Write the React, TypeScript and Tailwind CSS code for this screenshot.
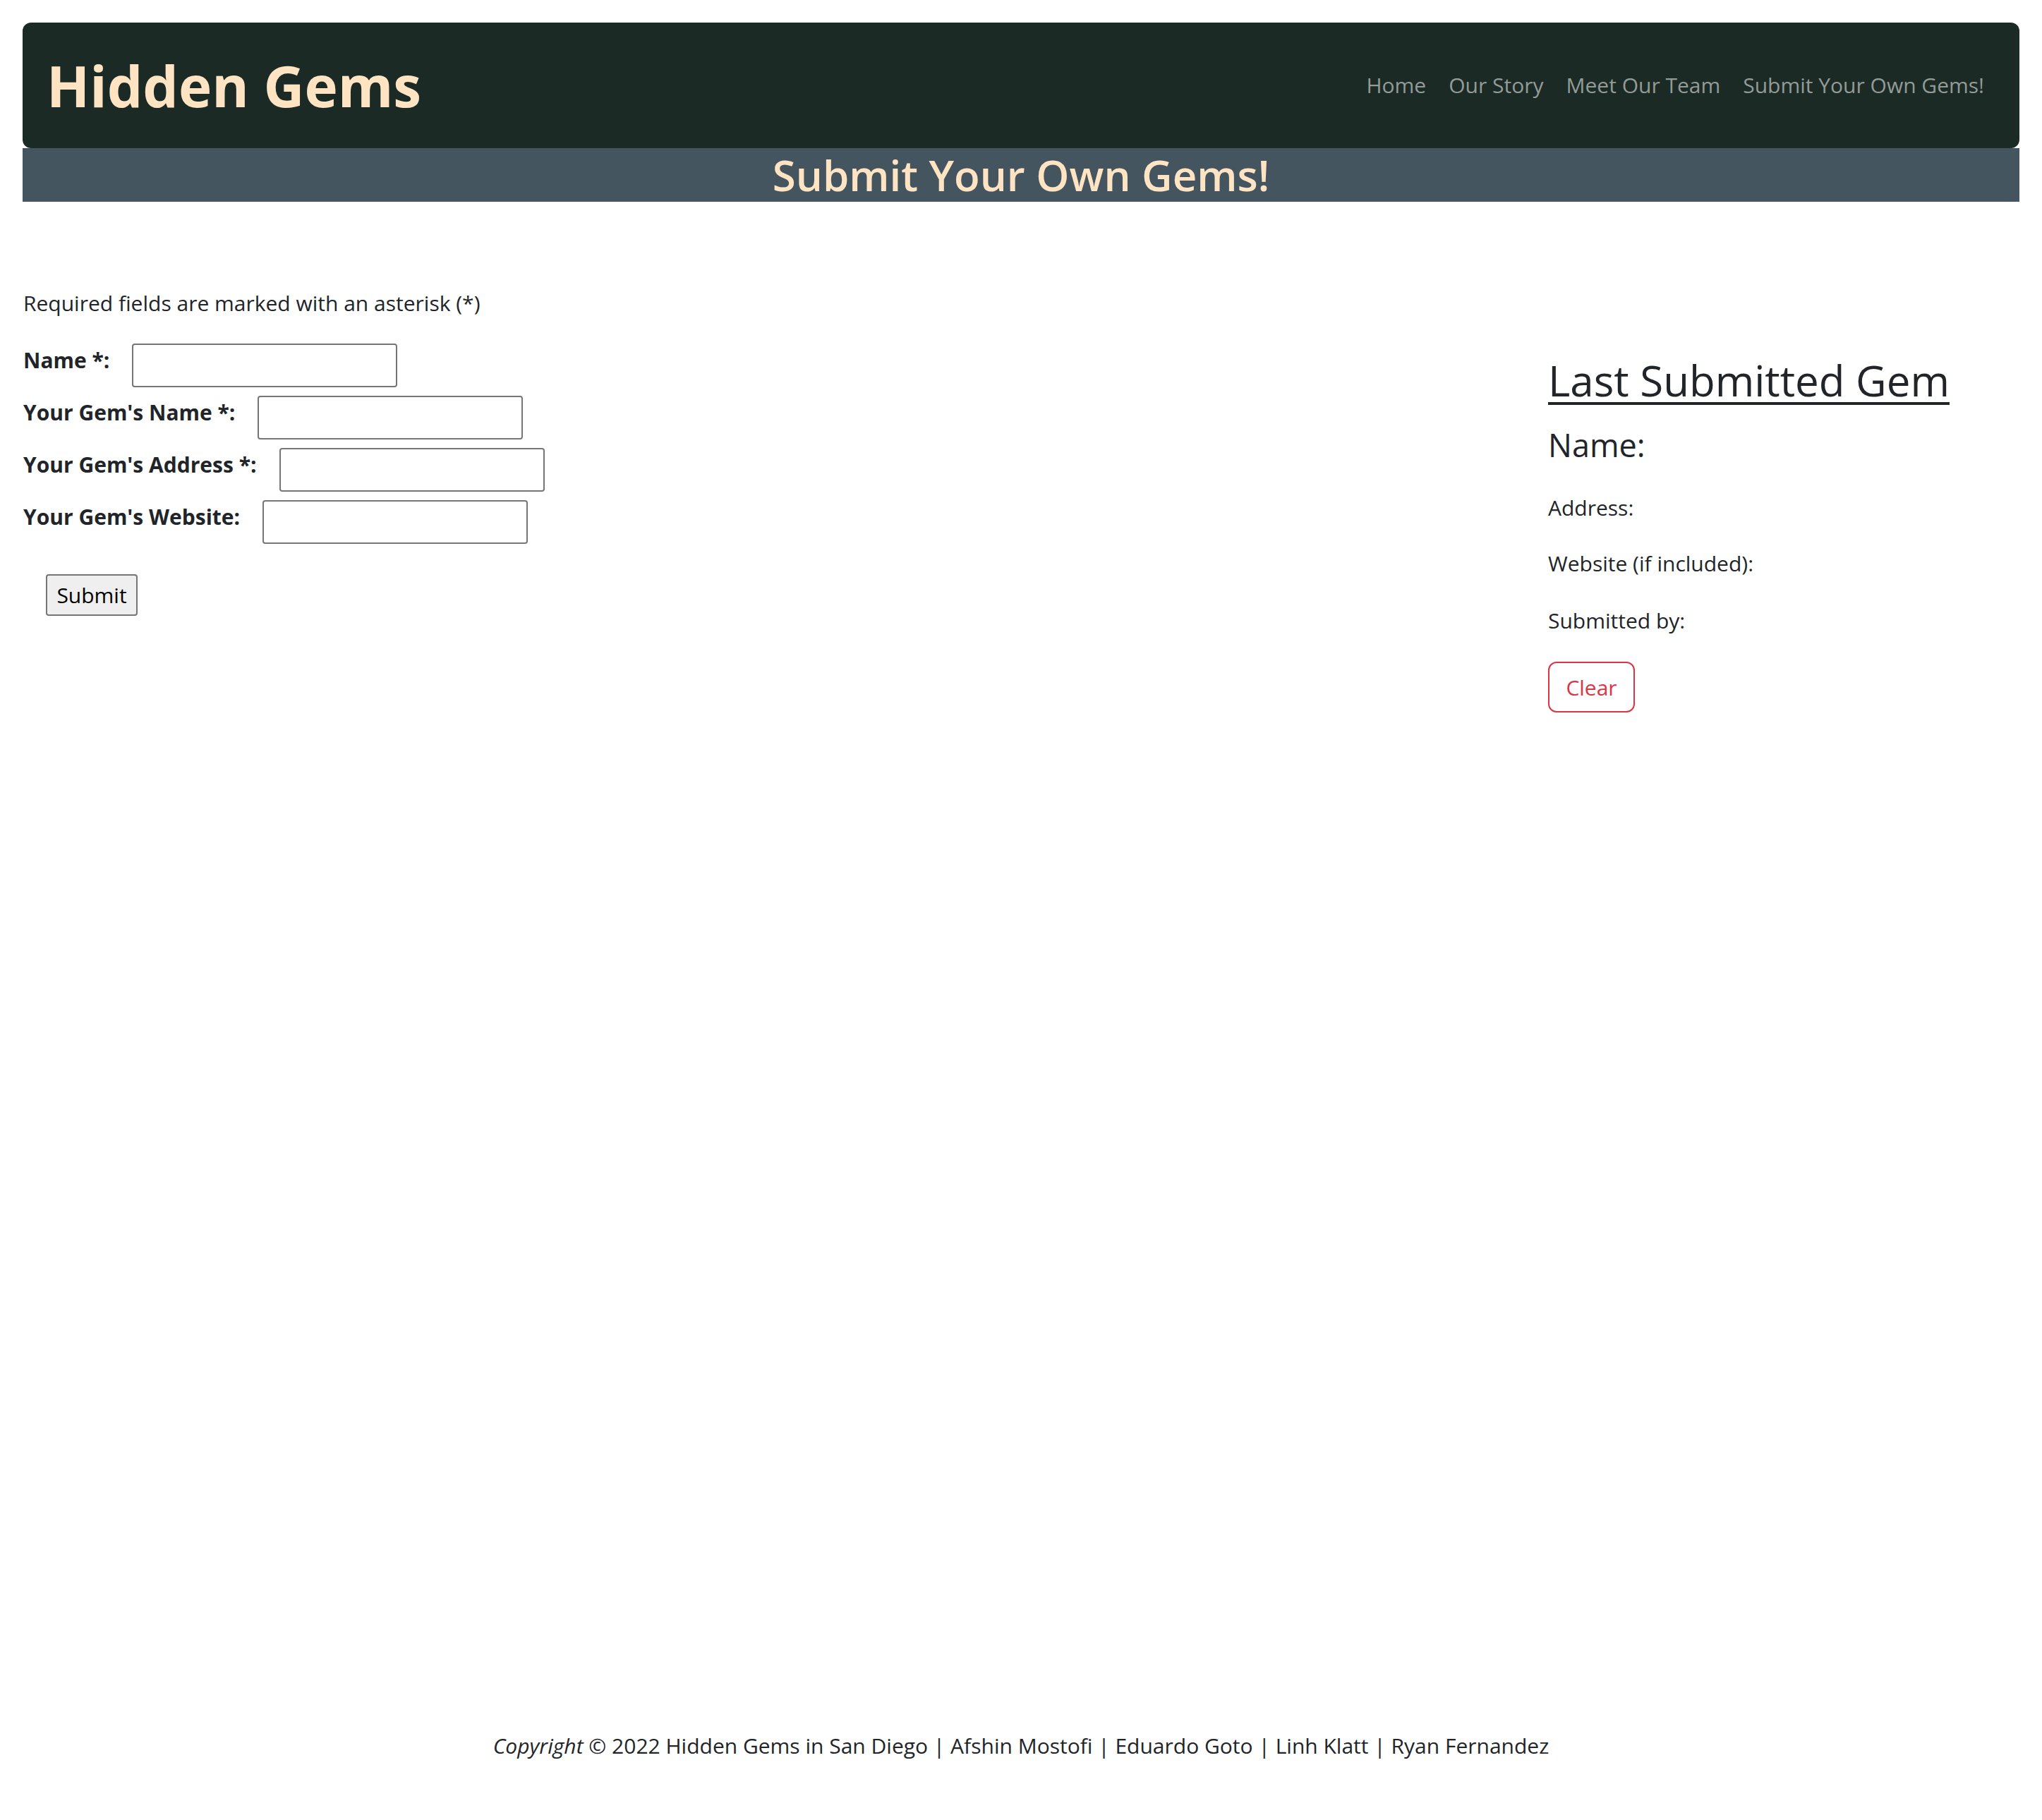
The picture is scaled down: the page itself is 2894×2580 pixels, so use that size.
const NavLinks = () => {
    const links = ['Home', 'Our Story', 'Meet Our Team', 'Submit Your Own Gems!']
    return (
        <nav className="flex flex-row items-center gap-[32px] text-[30px] leading-[48px] text-[#929b96]">
            {links.map((l) => (
                <a key={l} href="#" className="whitespace-nowrap">
                    {l}
                </a>
            ))}
        </nav>
    )
}

const FormRow = ({ label }: { label: string }) => {
    return (
        <div className="flex flex-row items-start gap-[32px]">
            <label className="text-[30px] font-bold leading-[48px] whitespace-nowrap">{label}</label>
            <input
                type="text"
                className="h-[62px] w-[376px] rounded-[4px] border-2 border-[#767676] bg-white px-2 text-[27px]"
            />
        </div>
    )
}

const SubmitForm = () => {
    return (
        <div className="flex flex-col pl-[33px]">
            <p className="mb-[33px] text-[30px] leading-[48px]">Required fields are marked with an asterisk (*)</p>
            <div className="flex flex-col gap-[12px]">
                <FormRow label="Name *:" />
                <FormRow label="Your Gem's Name *:" />
                <FormRow label="Your Gem's Address *:" />
                <FormRow label="Your Gem's Website:" />
            </div>
            <div className="mt-[43px] ml-[32px]">
                <button className="flex h-[59px] w-[130px] items-center justify-center rounded-[4px] border-2 border-[#767676] bg-[#efefef] text-[30px] text-black">
                    Submit
                </button>
            </div>
        </div>
    )
}

const LastGem = () => {
    return (
        <div className="flex w-[668px] flex-col items-start pt-[97px]">
            <h2 className="text-[60px] leading-[72px] underline decoration-[4px] underline-offset-[8px]">
                Last Submitted Gem
            </h2>
            <h4 className="mt-[29px] text-[45px] leading-[54px]">Name:</h4>
            <p className="mt-[38px] text-[30px] leading-[48px]">Address:</p>
            <p className="mt-[31px] text-[30px] leading-[48px]">Website (if included):</p>
            <p className="mt-[33px] text-[30px] leading-[48px]">Submitted by:</p>
            <button className="mt-[34px] flex h-[72px] w-[123px] items-center justify-center rounded-[12px] border-2 border-[#dc3545] text-[30px] text-[#dc3545]">
                Clear
            </button>
        </div>
    )
}

export default function App() {
    return (
        <div className="flex h-[2580px] w-full flex-col bg-white font-['Open_Sans',sans-serif] text-[#212529]">
            <header className="px-[32px] pt-[32px]">
                <div className="flex h-[178px] flex-row items-center justify-between rounded-[12px] bg-[#1b2a25] pl-[34px] pr-[50px]">
                    <h1 className="text-[80px] font-bold leading-[96px] text-[#ffe4c4]">Hidden Gems</h1>
                    <NavLinks />
                </div>
                <div className="flex h-[76px] items-center justify-center bg-[#455560]">
                    <h2 className="text-[60px] font-semibold leading-[76px] text-[#ffe4c4]">Submit Your Own Gems!</h2>
                </div>
            </header>
            <main className="flex flex-row justify-between pt-[120px] pr-[32px]">
                <SubmitForm />
                <LastGem />
            </main>
            <footer className="mt-auto pb-[81px] text-center text-[30px] leading-[48px]">
                <em>Copyright</em> © 2022 Hidden Gems in San Diego | Afshin Mostofi | Eduardo Goto | Linh Klatt | Ryan
                Fernandez
            </footer>
        </div>
    )
}
